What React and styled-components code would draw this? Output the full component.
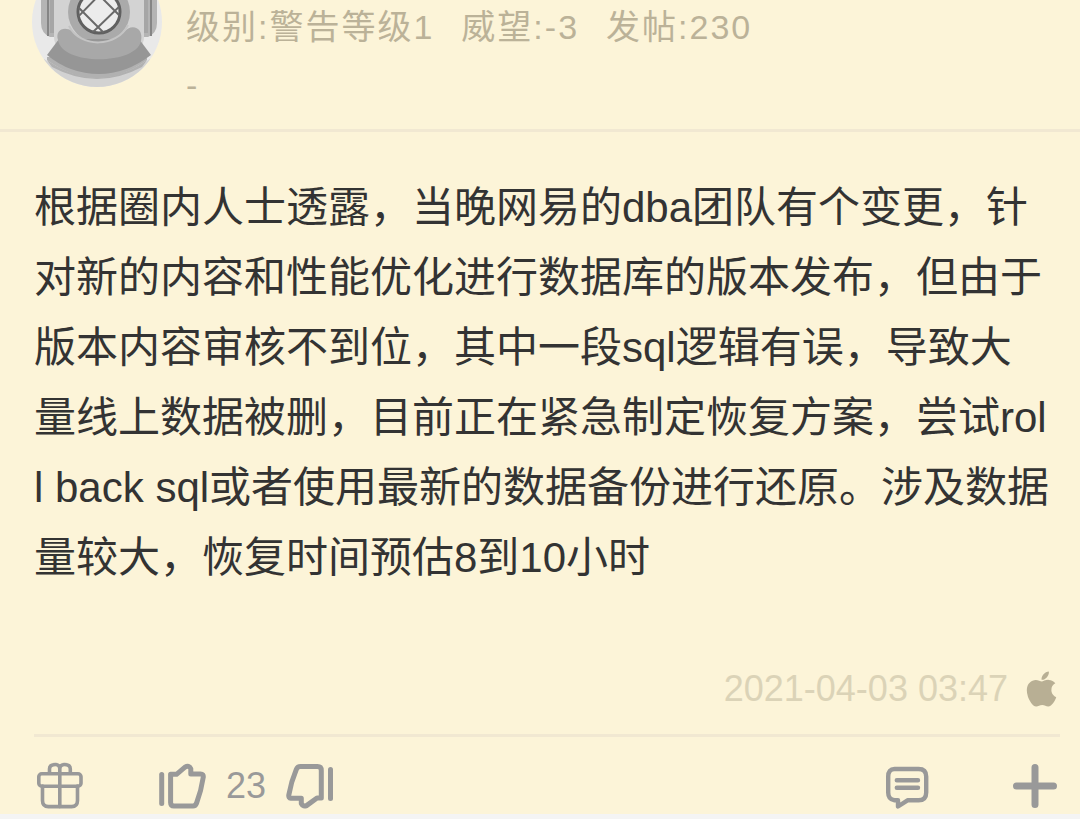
import React from "react";
import styled, { createGlobalStyle } from "styled-components";
import { FaApple } from "react-icons/fa";

const Global = createGlobalStyle`
  *, *::before, *::after { box-sizing: border-box; }
  body {
    margin: 0;
    background: #f4f4f4;
    font-family: "Liberation Sans", "Noto Sans CJK SC", sans-serif;
  }
`;

const Post = styled.article`
  background: #fcf4d8;
  overflow: hidden;
`;

const Header = styled.header`
  display: flex;
  gap: 24px;
  height: 132px;
  padding-left: 32px;
  border-bottom: 3px solid #f1e8d2;
`;

const Avatar = styled.svg`
  flex: none;
  display: block;
  width: 130px;
  height: 87px;
`;

const Meta = styled.div`
  margin-top: -2px;
  color: #bbb298;
  font-size: 34px;
  line-height: 58px;
  letter-spacing: 2px;
`;

const Stats = styled.div`
  display: flex;
  gap: 27px;
`;

const Content = styled.p`
  margin: 0;
  padding: 41px 28px 0 34px;
  color: #333;
  font-size: 42px;
  line-height: 70px;
  word-break: break-all;
`;

const Posted = styled.div`
  display: flex;
  justify-content: flex-end;
  align-items: center;
  gap: 18px;
  height: 83px;
  margin: 61px 20px 0 34px;
  padding: 0 3px 10px 0;
  border-bottom: 3px solid #f1e8d2;
  color: #dbd3b7;
  font-size: 36px;
`;

const Device = styled(FaApple)`
  width: 31px;
  height: 40px;
  color: #b8af94;
`;

const Actions = styled.footer`
  display: flex;
  align-items: flex-start;
  justify-content: space-between;
  height: 77px;
  padding: 25px 21px 0 36px;
`;

const Group = styled.div`
  display: flex;
  align-items: center;
  gap: ${(p) => p.$gap}px;
`;

const Count = styled.span`
  color: #999;
  font-size: 36px;
  line-height: 48px;
`;

const IconButton = styled.button`
  display: block;
  padding: 0;
  border: 0;
  background: none;
  color: #999;
  cursor: pointer;

  svg {
    display: block;
    width: 48px;
    height: 48px;
    fill: none;
    stroke: currentColor;
    stroke-linecap: round;
    stroke-linejoin: round;
  }
`;

function Action({ label, weight, children }) {
  return (
    <IconButton type="button" aria-label={label}>
      <svg viewBox="0 0 48 48" strokeWidth={weight} aria-hidden="true">
        {children}
      </svg>
    </IconButton>
  );
}

function DiverAvatar() {
  return (
    <Avatar viewBox="0 43 130 87" role="img" aria-label="头像">
      <defs>
        <clipPath id="disc"><circle cx="65" cy="65" r="65" /></clipPath>
        <clipPath id="glass"><circle cx="67" cy="55" r="21" /></clipPath>
      </defs>
      <g clipPath="url(#disc)">
        <rect width="130" height="130" fill="#e9e9e9" />
        <path d="M12 102Q65 138 118 102V130H12Z" fill="#d2d2d2" />
        <path d="M22 20H20Q9 22 9 32V66Q9 76 18 80H27V20Z" fill="#b4b4b4" />
        <path d="M112 20H114Q125 22 125 32V66Q125 76 116 80H107V20Z" fill="#b4b4b4" />
        <path d="M16 22V79M119 22V79" stroke="#858585" strokeWidth="2" />
        <rect x="22" y="20" width="90" height="76" rx="16" fill="#d3d3d3" />
        <path d="M20 25V76M114 25V76" stroke="#a6a6a6" strokeWidth="4" />
        <circle cx="67" cy="55" r="31" fill="#aaa" />
        <path d="M15 103Q65 138 115 103L110 110Q65 134 20 110Z" fill="#b1b1b1" />
        <path d="M15 103Q65 139 115 103V100H15Z" fill="#b1b1b1" />
        <path d="M27 82L15 98Q38 117 67 117Q94 117 119 98L107 82Z" fill="#969696" />
        <path d="M26 83C23 73 32 69 40 74C48 81 57 85 67 85C78 85 86 80 92 75C99 66 112 70 109 84C104 108 30 109 26 83Z" fill="#a8a8a8" />
        <path d="M37 69C48 91 85 91 96 68" fill="none" stroke="#c4c4c4" strokeWidth="2" />
        <circle cx="67" cy="55" r="21" fill="#ececec" stroke="#606060" strokeWidth="3" />
        <g clipPath="url(#glass)" fill="none" stroke="#696969" strokeWidth="2">
          <path d="M44 48L74 78M60 76L92 45M44 62L75 30M59 30L92 63" />
        </g>
      </g>
    </Avatar>
  );
}

export default function App() {
  return (
    <>
      <Global />
      <Post>
        <Header>
          <DiverAvatar />
          <Meta>
            <Stats>
              <span>级别:警告等级1</span>
              <span>威望:-3</span>
              <span>发帖:230</span>
            </Stats>
            <div>-</div>
          </Meta>
        </Header>

        <Content>
          根据圈内人士透露，当晚网易的dba团队有个变更，针对新的内容和性能优化进行数据库的版本发布，但由于版本内容审核不到位，其中一段sql逻辑有误，导致大量线上数据被删，目前正在紧急制定恢复方案，尝试roll back sql或者使用最新的数据备份进行还原。涉及数据量较大，恢复时间预估8到10小时
        </Content>

        <Posted>
          <time dateTime="2021-04-03T03:47">2021-04-03 03:47</time>
          <Device aria-label="Apple" />
        </Posted>

        <Actions>
          <Group $gap={74}>
            <Action label="送礼" weight="3.6">
              <rect x="2.8" y="11.8" width="42.2" height="12.4" rx="3" />
              <path d="M6.5 24V38.5Q6.5 44.6 12.5 44.6H35.5Q41.5 44.6 41.5 38.5V24M23.8 11V45" />
              <path d="M23.8 11V7Q23.8 2.5 19.5 2.5Q13.5 2.5 13.5 7V11M23.8 7Q23.8 2.5 28.5 2.5Q34.3 2.5 34.3 7V11" />
            </Action>
            <Group $gap={20}>
              <Action label="赞" weight="5">
                <path d="M3.7 12.5V41.5" />
                <path d="M14 12.3H18.5L27 5.2Q31 2.8 32.8 6.8V12H42.5Q45.8 12 45.2 15.5Q43.2 29 38.6 41Q37.5 44 35 44H16Q12.6 44 12.6 40.5V12.3Z" />
              </Action>
              <Count>23</Count>
              <Action label="踩" weight="5">
                <path d="M44.5 7.5V36.5" />
                <path d="M14.5 4.6H31.5Q35.3 4.6 35.3 8.5V36H31L20.5 43.6Q17.3 45 15.3 41.5V36.3H5Q2.4 36 2.8 33Q5 20 10.3 7.5Q11.5 4.6 14.5 4.6Z" />
              </Action>
            </Group>
          </Group>
          <Group $gap={79}>
            <Action label="评论" weight="4.4">
              <path d="M10.5 7H34.5Q42.2 7 42.2 14.5V30.5Q42.2 38.3 34.5 38.3H23.5L14 44.5V38.3H10.5Q4.2 37.5 4.2 30.5V14.5Q4.2 7 10.5 7Z" />
              <path d="M12.8 18.3H34M12.8 25.8H34" />
            </Action>
            <Action label="更多" weight="7">
              <path d="M24 5.5V42.5M5.5 24H42.5" />
            </Action>
          </Group>
        </Actions>
      </Post>
    </>
  );
}
